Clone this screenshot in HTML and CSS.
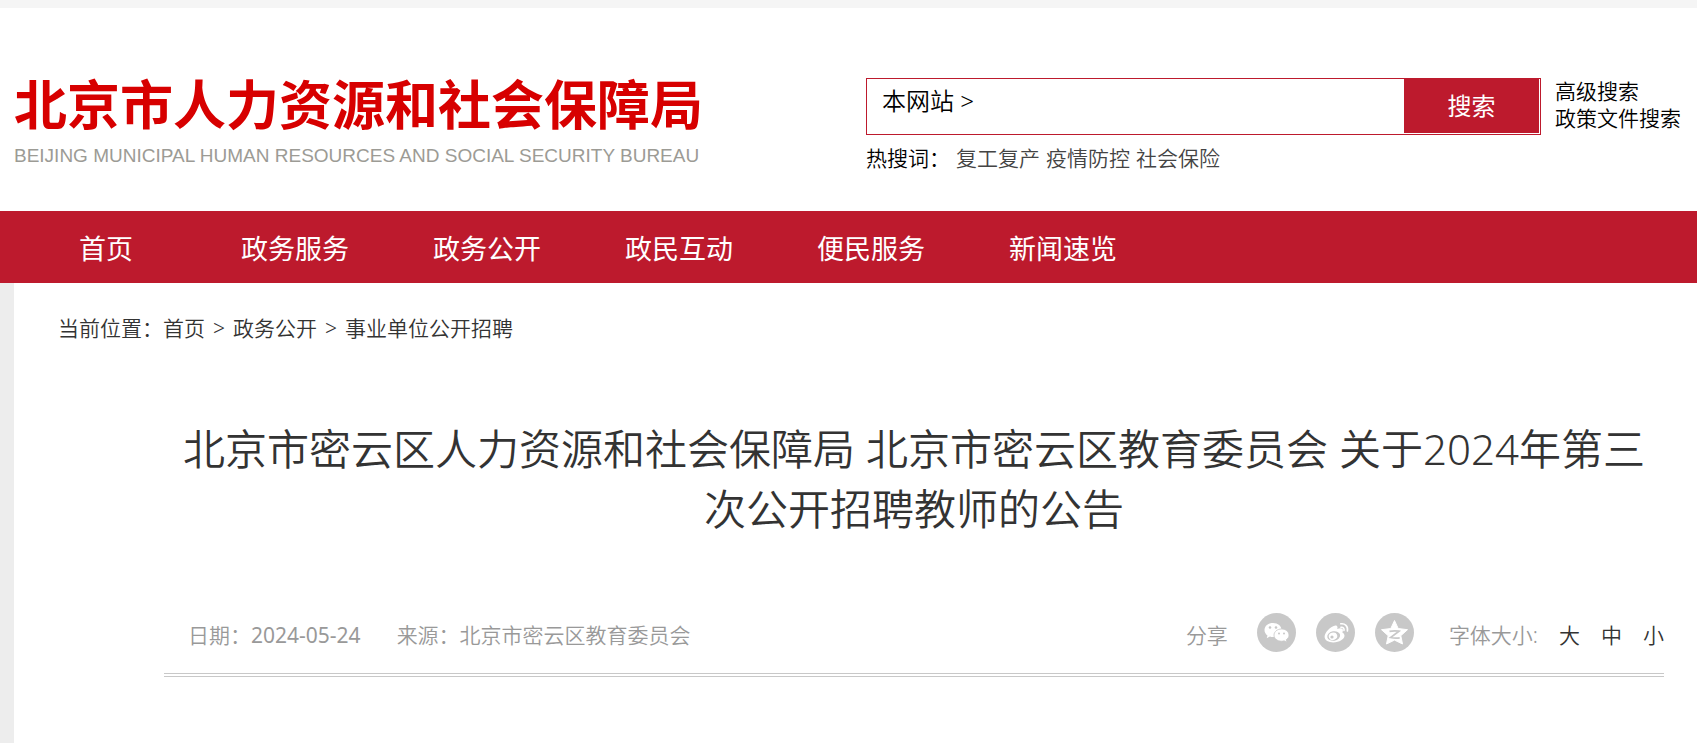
FILE: index.html
```html
<!DOCTYPE html>
<html lang="zh-CN">
<head>
    <meta charset="UTF-8">
    <title>北京市人力资源和社会保障局</title>
    <link rel="stylesheet" href="styles.css">
</head>
<body>
    <header class="header">
        <a class="logo" href="#">
            <span class="logo-cn">北京市人力资源和社会保障局</span>
            <span class="logo-en">BEIJING MUNICIPAL HUMAN RESOURCES AND SOCIAL SECURITY BUREAU</span>
        </a>
        <div class="search">
            <form class="search-box">
                <button type="button" class="search-scope">本网站 &gt;</button>
                <input type="text" class="search-input" aria-label="搜索内容">
                <button type="submit" class="search-button">搜索</button>
            </form>
            <div class="hot-words">
                <span class="hot-label">热搜词：</span>
                <a href="#">复工复产</a>
                <a href="#">疫情防控</a>
                <a href="#">社会保险</a>
            </div>
        </div>
        <div class="search-links">
            <a href="#">高级搜索</a>
            <a href="#">政策文件搜索</a>
        </div>
    </header>

    <nav class="nav">
        <a href="#">首页</a>
        <a href="#">政务服务</a>
        <a href="#">政务公开</a>
        <a href="#">政民互动</a>
        <a href="#">便民服务</a>
        <a href="#">新闻速览</a>
    </nav>

    <main class="main">
        <div class="crumbs">
            <span>当前位置：</span><a href="#">首页</a><span class="sep">&gt;</span><a href="#">政务公开</a><span class="sep">&gt;</span><a href="#">事业单位公开招聘</a>
        </div>

        <div class="article">
            <h1 class="title">北京市密云区人力资源和社会保障局 北京市密云区教育委员会 关于2024年第三次公开招聘教师的公告</h1>
            <div class="meta">
                <span class="date">日期：<span class="num">2024-05-24</span></span>
                <span class="source">来源：北京市密云区教育委员会</span>
                <span class="share-label">分享</span>
                <div class="share">
                    <!-- 微信 -->
                    <a href="#" aria-label="微信">
                        <svg viewBox="0 0 39 39">
                            <circle cx="19.5" cy="19.5" r="19.5" fill="#c8c8c8"/>
                            <path d="M16 10c-5 0-8.500 3.200-8.500 7 0 2.300 1.200 4.200 3 5.500l-.8 2.700 3.200-1.600c1 .3 2 .4 3.100.4 5 0 8.500-3.100 8.500-7s-3.500-7-8.500-7z" fill="#fff"/>
                            <path d="M24.500 16c-4.200 0-7.500 2.700-7.500 6.100s3.300 6.100 7.500 6.100c.9 0 1.800-.1 2.600-.4l2.800 1.400-.7-2.400c1.700-1.100 2.800-2.800 2.800-4.700 0-3.400-3.300-6.100-7.500-6.100z" fill="#fff" stroke="#c8c8c8" stroke-width=".8"/>
                            <g fill="#c8c8c8">
                                <circle cx="13" cy="14.500" r="1.300"/>
                                <circle cx="19" cy="14.500" r="1.300"/>
                                <circle cx="22" cy="20.500" r="1"/>
                                <circle cx="27" cy="20.500" r="1"/>
                            </g>
                        </svg>
                    </a>
                    <!-- 微博 -->
                    <a href="#" aria-label="微博">
                        <svg viewBox="0 0 39 39">
                            <circle cx="19.5" cy="19.5" r="19.500" fill="#c8c8c8"/>
                            <path d="M26.300 19.500c.7-1.400.9-2.700.2-3.500-1-1.100-3.200-.8-5.300.1.500-1.500.4-2.600-.3-3.100-1.900-1.500-6.300 1.200-9.300 4.500-1.900 2.100-3 4.400-3 6.200 0 3.600 4.200 5.700 8.600 5.700 6.200 0 11.300-3.300 11.300-6.600 0-1.700-1-2.800-2.200-3.300z" fill="#fff"/>
                            <ellipse cx="17.700" cy="23" rx="6.500" ry="4.700" transform="rotate(-10 17.700 23)" fill="#c8c8c8"/>
                            <ellipse cx="17" cy="23.300" rx="4.300" ry="3.700" transform="rotate(-20 17 23.300)" fill="#fff"/>
                            <circle cx="16" cy="24" r="1.600" fill="#c8c8c8"/>
                            <path d="M24.800 10.800c4-.7 7.500 2.600 6.600 7.200M25 14.300c2-.4 3.500 1.100 3 3.100" fill="none" stroke="#fff" stroke-width="1.600" stroke-linecap="round"/>
                        </svg>
                    </a>
                    <!-- QQ空间 -->
                    <a href="#" aria-label="QQ空间">
                        <svg viewBox="0 0 39 39">
                            <circle cx="19.5" cy="19.5" r="19.5" fill="#c8c8c8"/>
                            <path d="M19.500 7.500l3.700 8 9.300 1.200-6.700 6 1.700 8.300-8-3.900-8 3.900 1.700-8.300-6.700-6 9.300-1.200z" fill="#fff" stroke="#fff" stroke-linejoin="round"/>
                            <path d="M14.500 18.300c3.500-.6 6.500-.6 9.500-.1l-8.500 6.300c3 .7 6 .8 9.200.4" fill="none" stroke="#c8c8c8" stroke-width="1.700"/>
                        </svg>
                    </a>
                </div>
                <div class="font-size">
                    <span>字体大小:</span>
                    <button type="button">大</button>
                    <button type="button">中</button>
                    <button type="button">小</button>
                </div>
            </div>
        </div>
    </main>
</body>
</html>
```
FILE: styles.css
```css
* {
    box-sizing: border-box;
}
body {
    margin: 0;
    border-top: 8px solid #f5f5f5;
    background-color: #fff;
    color: #000;
    font-family: "Noto Sans", "Noto Sans CJK SC", sans-serif;
    font-size: 21px;
    font-weight: 350;
    line-height: 27px;
    min-height: 100vh;
    display: flex;
    flex-direction: column;
}
a {
    color: inherit;
    text-decoration: none;
}
button,
input {
    font: inherit;
    color: inherit;
    border: 0;
    padding: 0;
    background: none;
}
button {
    cursor: pointer;
}
.num {
    font-weight: 400;
}

/* 头部 */
.header {
    display: flex;
    align-items: flex-start;
    padding: 70px 16px 39px 14px;
}
.logo {
    display: flex;
    flex-direction: column;
    flex: none;
    width: 692px;
    white-space: nowrap;
}
.logo-cn {
    color: #d70000;
    font-size: 53px;
    font-weight: 700;
    line-height: 54px;
}
.logo-en {
    margin-top: 10px;
    color: #9c9b95;
    font-family: "Liberation Sans", Arial, sans-serif;
    font-size: 19px;
    font-weight: 400;
    line-height: 27px;
}
.search {
    flex: 1;
    margin-left: 160px;
}
.search-box {
    display: flex;
    height: 57px;
    padding: 0 1px 1px 0;
    border: 1px solid #bd1a2d;
}
.search-scope {
    align-self: flex-start;
    padding: 4px 0 0 15px;
    font-size: 24px;
    line-height: 36px;
}
.search-input {
    flex: 1;
    min-width: 0;
    padding: 0 12px;
    outline: none;
}
.search-button {
    width: 135px;
    padding-bottom: 2px;
    background-color: #bd1a2d;
    color: #fff;
    font-size: 24px;
    font-weight: 400;
}
.hot-words {
    display: flex;
    gap: 6px;
    margin-top: 10px;
    color: #444;
}
.hot-label {
    color: #000;
}
.search-links {
    display: flex;
    flex-direction: column;
    margin-left: 14px;
}

/* 导航 */
.nav {
    display: flex;
    padding: 4px 0 0 13px;
    background-color: #bd1a2d;
    color: #fff;
    font-size: 27px;
    font-weight: 400;
    line-height: 68px;
}
.nav a {
    padding: 0 42px;
}
.nav a:first-child {
    padding: 0 66px;
}

/* 正文 */
.main {
    flex: 1;
    border-left: 14px solid #ededed;
    padding: 32px 33px 32px 44px;
    color: #333;
}
.sep {
    margin: 0 8px;
}
.article {
    margin: 77px 0 0 106px;
}
.title {
    margin: 0;
    font-size: 42px;
    font-weight: 350;
    line-height: 60px;
    text-align: center;
}
.meta {
    display: flex;
    align-items: center;
    margin-top: 62px;
    padding: 12px 0 16px 24px;
    border-bottom: 4px double #c8c8c8;
    color: #999;
}
.source {
    margin-left: 36px;
}
.share-label {
    margin-left: auto;
}
.share {
    display: flex;
    gap: 20px;
    margin: 0 35px 5px 29px;
}
.share svg {
    display: block;
    width: 39px;
    height: 39px;
}
.font-size {
    display: flex;
    gap: 21px;
}
.font-size button {
    color: #333;
}
```
